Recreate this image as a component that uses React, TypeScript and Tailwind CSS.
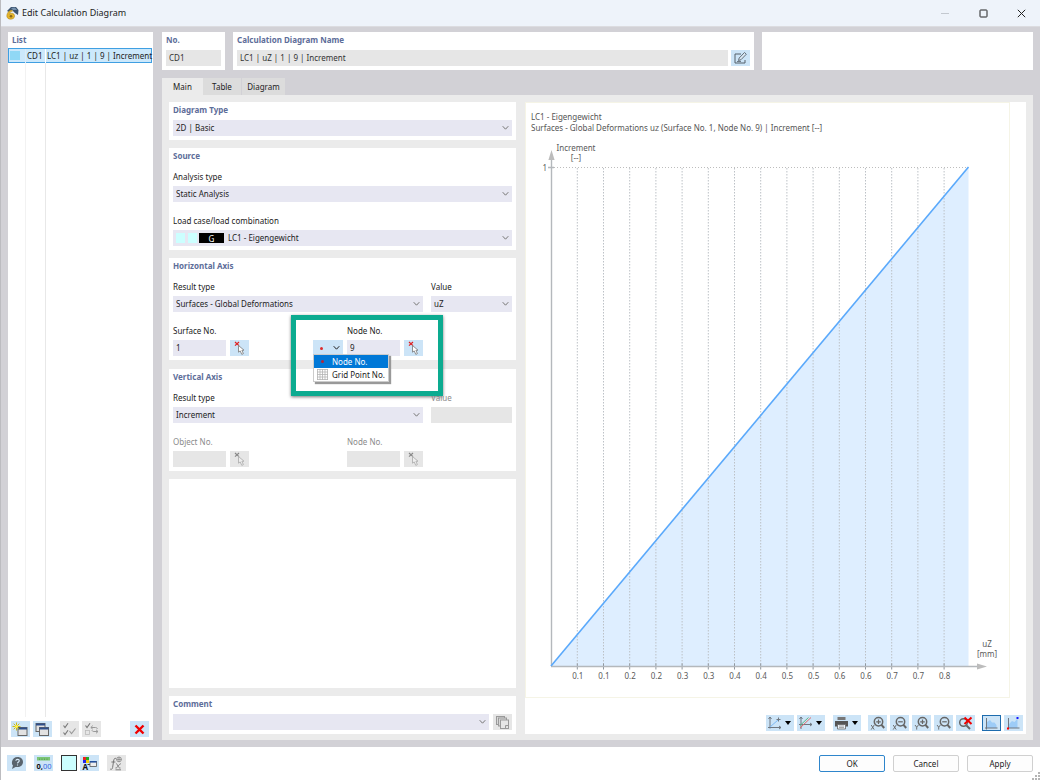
import { useState } from 'react';
import type { ReactNode } from 'react';

const FIELD = 'h-4 w-full min-w-0 appearance-none rounded-none border-0 bg-[#e7e7f2] px-[3px] text-[8px] leading-4 text-[#222] outline-none';
const DISABLED = 'h-4 w-full min-w-0 border-0 bg-[#e6e6e6] px-[3px] text-[8px] leading-4 text-[#333] outline-none';

const ticks = ['0.1', '0.1', '0.2', '0.2', '0.3', '0.3', '0.4', '0.4', '0.5', '0.5', '0.6', '0.6', '0.7', '0.7', '0.8'];

interface PanelProps {
  title?: string;
  className?: string;
  children?: ReactNode;
}

const Panel = ({ title, className = '', children }: PanelProps) => (
  <section className={`bg-white px-1 pb-1 ${className}`}>
    {title && <h2 className="h-[14px] text-[8px] leading-[15px] font-bold text-[#5d6d99]">{title}</h2>}
    {children}
  </section>
);

interface SelectProps {
  id: string;
  options: string[];
  label?: string;
  className?: string;
  fieldClass?: string;
  children?: ReactNode;
}

const Select = ({ id, options, label, className = '', fieldClass = '', children }: SelectProps) => (
  <div className={className}>
    {label && <label htmlFor={id} className="mb-0.5 block h-[14px] text-[8px] leading-[14px]">{label}</label>}
    <div className="relative h-4">
      <select id={id} aria-label={label ? undefined : id} className={`${FIELD} block ${fieldClass}`}>
        {options.map((o) => <option key={o}>{o}</option>)}
      </select>
      {children}
      <Chevron className="pointer-events-none absolute top-[5px] right-[3px]" />
    </div>
  </div>
);

const Chevron = ({ className = '' }: { className?: string }) => (
  <svg className={className} width="7" height="6" viewBox="0 0 7 6" fill="none" stroke="#777" strokeWidth="1">
    <path d="M0.7 1.2 L3.5 4.2 L6.3 1.2" />
  </svg>
);

interface IconButtonProps {
  label: string;
  disabled?: boolean;
  active?: boolean;
  wide?: boolean;
  children: ReactNode;
}

const IconButton = ({ label, disabled, active, wide, children }: IconButtonProps) => (
  <button
    type="button"
    aria-label={label}
    disabled={disabled}
    className={`flex h-4 shrink-0 items-center ${wide ? 'w-7 justify-between pr-[3px] pl-px' : 'w-[19px] justify-center'} ${disabled ? 'bg-[#e6e6e6]' : 'bg-[#cce4f7]'} ${active ? 'outline outline-1 -outline-offset-1 outline-[#1d6cae]' : ''}`}
  >
    {children}
    {wide && <svg width="6" height="4" viewBox="0 0 6 4"><path d="M0 0 H6 L3 4 Z" fill="#000" /></svg>}
  </button>
);

const PickIcon = ({ muted }: { muted?: boolean }) => (
  <svg width="15" height="15" viewBox="0 0 15 15" fill="none">
    <path d="M3 1 L7 4.6 M7 1 L3 4.6" stroke={muted ? '#888' : '#e02020'} strokeWidth="1.2" />
    <path d="M6.5 4.5 L6.5 11.2 L8.2 9.9 L9.8 13.4 L11.4 12.6 L9.9 9.4 L12 9.2 Z" fill={muted ? '#eee' : '#fff'} stroke={muted ? '#aaa' : '#777'} strokeWidth="0.8" />
  </svg>
);

const ZoomIcon = ({ axis, plus }: { axis: string; plus?: boolean }) => (
  <svg width="17" height="15" viewBox="0 0 17 15" fill="none" stroke="#666">
    <circle cx="9.5" cy="5.8" r="4.2" strokeWidth="1.5" />
    <path d="M12.5 8.8 L15.2 12" strokeWidth="2" />
    <path d={plus ? 'M7.2 5.8 H11.8 M9.5 3.5 V8.1' : 'M7.2 5.8 H11.8'} strokeWidth="1.2" />
    <path d={axis === 'X' ? 'M2.2 9 L5.2 13.6 M5.2 9 L2.2 13.6' : 'M2 9 L3.7 11.2 L5.4 9 M3.7 11.2 V13.6'} strokeWidth="0.9" />
  </svg>
);

const AppIcon = () => (
  <svg width="13" height="14" viewBox="0 0 13 14">
    <path d="M1 5 L5 1 L10 1 L12.5 4 L12 9 L9 7 L6 4 L3 6 Z" fill="#3c5470" />
    <path d="M5 2 L9 1.5 L11 4 L7 4 Z" fill="#7590ad" />
    <path d="M5.5 4 C1.5 5 0.4 9 1 11 C1.7 13.4 5 13.8 7.3 12.5 C9.4 11 8.8 7.8 6.4 7.3 C5 7 4 7.6 3.4 8.4 C3.6 6.7 4.6 5.4 6.6 5.2 Z" fill="#e5b52c" stroke="#a67c12" strokeWidth="0.5" />
    <circle cx="5" cy="10.2" r="1.3" fill="#8a6a1a" />
  </svg>
);

const TitleBar = () => (
  <header className="flex h-[26px] shrink-0 items-center bg-[#eef3fa] pl-[5px]">
    <AppIcon />
    <h1 className="ml-[3px] text-[9px] leading-4 text-[#1c1c1c]">Edit Calculation Diagram</h1>
    <div className="ml-auto flex h-full">
      <button type="button" aria-label="Minimize" disabled className="flex w-[38px] items-center justify-center">
        <svg width="8" height="8" viewBox="0 0 8 8"><path d="M0 4.5 H8" stroke="#c3c8cf" /></svg>
      </button>
      <button type="button" aria-label="Maximize" className="flex w-[38px] items-center justify-center">
        <svg width="9" height="9" viewBox="0 0 9 9"><rect x="1" y="1" width="7" height="7" rx="0.6" fill="none" stroke="#222" /></svg>
      </button>
      <button type="button" aria-label="Close" className="flex w-[38px] items-center justify-center">
        <svg width="9" height="9" viewBox="0 0 9 9"><path d="M0.8 0.8 L8.2 8.2 M8.2 0.8 L0.8 8.2" stroke="#222" /></svg>
      </button>
    </div>
  </header>
);

const WindowGlyph = ({ x, y }: { x: number; y: number }) => (
  <g>
    <rect x={x} y={y} width="9" height="8" fill="#e2e2e2" stroke="#666" strokeWidth="1" />
    <rect x={x} y={y} width="9" height="2" fill="#2d4f8c" />
  </g>
);

const ListPanel = () => (
  <aside className="flex w-[145px] shrink-0 flex-col bg-white pb-[3px]">
    <h2 className="h-4 pl-1 text-[8px] leading-4 font-bold text-[#5d6d99]">List</h2>
    <div className="mr-px grid flex-1 grid-cols-[17px_20px_1fr] grid-rows-[15px_1fr] text-[8px] leading-[15px]">
      <button
        type="button"
        className="col-span-3 grid grid-cols-[16px_20px_1fr] border border-[#3f9fe2] bg-[#cce8fb] text-left leading-[13px] whitespace-nowrap text-[#222]"
      >
        <span className="mt-0.5 ml-px h-[9px] w-[10px] bg-[#90d8f5]" />
        <span className="border-l border-[#dcecf8] pl-px">CD1</span>
        <span className="border-l border-white pl-px">LC1 | u<span className="text-[7px]">Z</span> | 1 | 9 | Increment</span>
      </button>
      <span />
      <span className="border-l border-[#f2f2f2]" />
      <span className="border-l border-[#e8e8e8]" />
    </div>
    <div className="mt-1 flex items-center gap-[3px] pr-1 pl-[3px]">
      <IconButton label="New">
        <svg width="17" height="15" viewBox="0 0 17 15">
          <WindowGlyph x={6} y={5.5} />
          <path d="M4.5 0.5 V8.5 M0.5 4.5 H8.5 M1.7 1.7 L7.3 7.3 M7.3 1.7 L1.7 7.3" stroke="#c9b500" strokeWidth="0.9" />
          <circle cx="4.5" cy="4.5" r="1.6" fill="#fff04a" />
        </svg>
      </IconButton>
      <IconButton label="Copy">
        <svg width="17" height="15" viewBox="0 0 17 15">
          <WindowGlyph x={2} y={1.5} />
          <WindowGlyph x={5.5} y={5.5} />
        </svg>
      </IconButton>
      <span className="w-0.5" />
      <IconButton label="Select all" disabled>
        <svg width="17" height="15" viewBox="0 0 17 15" fill="none" stroke="#777" strokeWidth="1.1">
          <path d="M2.5 3.5 L4 5.5 L7 1.2 M2.5 10.5 L4 12.5 L7 8.2" />
          <path d="M8.5 9 L10.5 11.5 L14.5 6.5" stroke="#999" />
        </svg>
      </IconButton>
      <IconButton label="Invert selection" disabled>
        <svg width="17" height="15" viewBox="0 0 17 15" fill="none" stroke="#777" strokeWidth="1.1">
          <path d="M2.5 3.5 L4 5.5 L7 1.2" />
          <rect x="2.5" y="8.5" width="4" height="4" stroke="#bbb" strokeWidth="0.8" />
          <path d="M7.8 5.5 L9.8 3.6 M7.8 5.5 L9.8 7.2 M8 5.5 H12.5 C13.8 5.5 14.3 6.2 14.3 7 M15 9.5 L13 7.8 M15 9.5 L13 11.3 M14.8 9.5 H11 C9.8 9.5 9 9 9 8.2" stroke="#999" strokeWidth="1" />
        </svg>
      </IconButton>
      <span className="flex-1" />
      <IconButton label="Delete">
        <svg width="11" height="11" viewBox="0 0 11 11"><path d="M1.5 1.5 L9.5 9.5 M9.5 1.5 L1.5 9.5" stroke="#f00000" strokeWidth="2.4" /></svg>
      </IconButton>
    </div>
  </aside>
);

interface NumberFieldProps {
  id: string;
  label: string;
  value?: string;
  disabled?: boolean;
}

const NumberField = ({ id, label, value = '', disabled }: NumberFieldProps) => (
  <div className={`grid grid-cols-[53px_19px] gap-x-1 gap-y-0.5 ${disabled ? 'text-[#8b8b8b]' : ''}`}>
    <label htmlFor={id} className="col-span-2 h-[14px] text-[8px] leading-[14px]">{label}</label>
    <input id={id} type="text" defaultValue={value} disabled={disabled} className={disabled ? DISABLED : FIELD} />
    <IconButton label={`Pick ${label}`} disabled={disabled}><PickIcon muted={disabled} /></IconButton>
  </div>
);

const NodeTypePicker = () => {
  const [type, setType] = useState('Node No.');
  return (
    <div className="relative mr-1 self-end">
      <button type="button" aria-haspopup="listbox" aria-expanded="true" aria-label={type} className="flex h-4 w-[30px] items-center justify-between bg-[#cce4f7] pr-[3px] pl-[7px]">
        <span className="h-[3px] w-[3px] rounded-full bg-[#dd2c2c]" />
        <svg width="7" height="6" viewBox="0 0 7 6" fill="none" stroke="#222"><path d="M0.7 1.2 L3.5 4.2 L6.3 1.2" /></svg>
      </button>
      <div role="listbox" className="absolute top-[14px] left-0 z-10 w-[76px] border border-[#ccc] bg-white text-[8px] leading-[13px] whitespace-nowrap shadow-[2px_2px_1px_#999]">
        <button type="button" role="option" aria-selected="true" onClick={() => setType('Node No.')} className="flex h-[13px] w-full items-center bg-[#0078d7] text-white">
          <span className="ml-[7px] h-[3px] w-[3px] rounded-full bg-[#b3263a]" />
          <span className="ml-2">Node No.</span>
        </button>
        <button type="button" role="option" aria-selected="false" onClick={() => setType('Grid Point No.')} className="flex h-[13px] w-full items-center text-[#222]">
          <svg className="ml-[3px]" width="11" height="11" viewBox="0 0 11 11" stroke="#b4b4b4" strokeWidth="0.8">
            <path d="M0.5 0 V11 M3 0 V11 M5.5 0 V11 M8 0 V11 M10.5 0 V11 M0 0.5 H11 M0 3 H11 M0 5.5 H11 M0 8 H11 M0 10.5 H11" />
          </svg>
          <span className="ml-1">Grid Point No.</span>
        </button>
      </div>
    </div>
  );
};

const Settings = () => (
  <div className="flex w-[347px] shrink-0 flex-col gap-2">
    <Panel title="Diagram Type">
      <Select id="Diagram Type" options={['2D | Basic']} className="mt-1" />
    </Panel>
    <Panel title="Source">
      <Select id="analysis" label="Analysis type" options={['Static Analysis']} className="mt-2" />
      <Select id="loadcase" label="Load case/load combination" options={['LC1 - Eigengewicht']} className="mt-3" fieldClass="pl-[55px]">
        <span className="pointer-events-none absolute top-[3px] left-[3px] flex h-[10px] gap-[3px]">
          <span className="w-[9px] bg-[#ccffff]" />
          <span className="w-[9px] bg-[#ccffff]" />
          <span className="-ml-px w-[25px] bg-black text-center text-[8px] leading-[11px] text-white">G</span>
        </span>
      </Select>
    </Panel>
    <Panel title="Horizontal Axis" className="relative">
      <div className="mt-2 flex gap-2">
        <Select id="h-result" label="Result type" options={['Surfaces - Global Deformations']} className="flex-1" />
        <Select id="h-value" label="Value" options={['uZ']} className="w-[81px]" />
      </div>
      <div className="mt-3 mr-[89px] flex">
        <NumberField id="surface" label="Surface No." value="1" />
        <span className="flex-1" />
        <NodeTypePicker />
        <NumberField id="node" label="Node No." value="9" />
      </div>
      <div className="pointer-events-none absolute top-[57px] left-[122px] z-20 h-[81px] w-[152px] border-[5px] border-[#0cab90] shadow-[0_1px_3px_#777]" />
    </Panel>
    <Panel title="Vertical Axis" className="mt-px">
      <div className="mt-2 flex gap-2">
        <Select id="v-result" label="Result type" options={['Increment']} className="flex-1" />
        <div className="w-[81px]">
          <label htmlFor="v-value" className="mb-0.5 block h-[14px] text-[8px] leading-[14px] text-[#8b8b8b]">Value</label>
          <input id="v-value" type="text" disabled className={`${DISABLED} block`} />
        </div>
      </div>
      <div className="mt-3 mr-[89px] flex justify-between">
        <NumberField id="object" label="Object No." disabled />
        <NumberField id="v-node" label="Node No." disabled />
      </div>
    </Panel>
    <Panel className="flex-1" />
    <Panel title="Comment">
      <div className="mt-1 flex gap-1">
        <Select id="Comment" options={['']} className="flex-1" />
        <IconButton label="Edit comments" disabled>
          <svg width="15" height="15" viewBox="0 0 15 15" fill="#d8d8d8" stroke="#999">
            <rect x="1.5" y="1.5" width="8" height="8" />
            <rect x="3.5" y="3" width="8" height="8" />
            <rect x="5.5" y="5" width="8" height="8.5" fill="#e6e6e6" />
            <path d="M10.5 13 V10.5 H13" />
          </svg>
        </IconButton>
      </div>
    </Panel>
  </div>
);

const Chart = () => (
  <svg className="mt-0.5 min-h-0 w-full flex-1" viewBox="0 0 483 561" preserveAspectRatio="xMinYMin meet" fontSize="8" fill="#5a5a5a">
    <path d="M25 530 L442.5 31 V530 Z" fill="#deeeff" />
    <path d="M25 31.5 H442" stroke="#bdbdbd" strokeDasharray="1 2" />
    {ticks.map((t, i) => {
      const x = 51.3 + i * 26.2;
      return (
        <g key={i}>
          <path d={`M${x} 32 V530`} stroke="#bcc1c6" strokeDasharray="1.5 1.5" />
          <path d={`M${x} 527.5 V533.5`} stroke="#8f979f" />
          <text x={x + 0.5} y="543" textAnchor="middle">{t}</text>
        </g>
      );
    })}
    <path d="M25.5 530 V24 M22 31.5 H28 M25 530.5 H452" stroke="#b4b8bc" strokeWidth="1.4" fill="none" />
    <path d="M25.5 14 L28.6 24 H22.4 Z M461 530.5 L451 533.6 V527.4 Z" fill="#bcbcbc" />
    <path d="M25 530 L442.5 31" stroke="#5aa9fb" strokeWidth="1.6" />
    <text x="21" y="34.5" textAnchor="end">1</text>
    <text x="50" y="15" textAnchor="middle">Increment</text>
    <text x="50" y="25" textAnchor="middle">[--]</text>
    <text x="461" y="511" textAnchor="middle">uZ</text>
    <text x="461" y="521" textAnchor="middle">[mm]</text>
  </svg>
);

const ChartToolbar = () => (
  <div className="flex justify-end gap-[3px] pr-[3px]">
    <IconButton label="Axis settings" wide>
      <svg width="15" height="14" viewBox="0 0 15 14" fill="none" stroke="#6f7780">
        <path d="M3 1 V12.5 M1 11.5 H14 M1.5 3 L3 1 L4.5 3 M12 10 L14 11.5 L12 13" />
        <path d="M3 11 L11 4" stroke="#7cb9f5" />
        <path d="M9.5 3.5 H13.5 M11.5 1.5 V5.5" />
      </svg>
    </IconButton>
    <IconButton label="Diagram curves" wide>
      <svg width="15" height="14" viewBox="0 0 15 14" fill="none" stroke="#6f7780">
        <path d="M3 1 V13 M1 8.5 H14 M1.5 3 L3 1 L4.5 3 M12 7 L14 8.5 L12 10" />
        <path d="M2 12 L13 1.5" stroke="#e06868" />
        <path d="M2 9.5 L10.5 1.5" stroke="#5fb88a" />
      </svg>
    </IconButton>
    <span className="w-0.5" />
    <IconButton label="Print" wide>
      <svg width="15" height="14" viewBox="0 0 15 14">
        <path d="M3.5 1 H11.5 V4 H3.5 Z" fill="#777" />
        <path d="M1 5 H14 V10.5 H1 Z" fill="#555" />
        <path d="M3.5 8.5 H11.5 V13 H3.5 Z" fill="#eef5fb" stroke="#666" strokeWidth="0.8" />
        <path d="M5 10 H10 M5 11.5 H10" stroke="#888" strokeWidth="0.7" />
      </svg>
    </IconButton>
    <span className="w-px" />
    <IconButton label="Zoom in X"><ZoomIcon axis="X" plus /></IconButton>
    <IconButton label="Zoom out X"><ZoomIcon axis="X" /></IconButton>
    <IconButton label="Zoom in Y"><ZoomIcon axis="Y" plus /></IconButton>
    <IconButton label="Zoom out Y"><ZoomIcon axis="Y" /></IconButton>
    <IconButton label="Reset zoom">
      <svg width="17" height="15" viewBox="0 0 17 15" fill="none">
        <circle cx="6.5" cy="6.5" r="3.8" stroke="#666" strokeWidth="1.5" />
        <path d="M9.5 9.5 L13 13" stroke="#666" strokeWidth="2" />
        <path d="M7.5 1.5 L14.5 8 M14.5 1.5 L7.5 8" stroke="#f00000" strokeWidth="2" />
      </svg>
    </IconButton>
    <span className="w-px" />
    <IconButton label="Fill area" active>
      <svg width="17" height="15" viewBox="0 0 17 15">
        <path d="M4 12 V6 L7 4 L9 6.5 L11.5 6.5 L13.5 9 V12 Z" fill="#9dccf7" />
        <path d="M3.5 2 V12 H14.5 M2 12 H3.5 V13.5" fill="none" stroke="#6f7780" />
      </svg>
    </IconButton>
    <IconButton label="Show extremes">
      <svg width="17" height="15" viewBox="0 0 17 15">
        <path d="M4 12 V8 L7 5 L9.5 6 L12.5 2.5 V12 Z" fill="#9dccf7" />
        <path d="M3.5 2 V12 H14.5" fill="none" stroke="#6f7780" />
        <rect x="2" y="11.5" width="2" height="2" fill="#f00" />
        <rect x="11.5" y="1" width="2" height="2" fill="#1515ff" />
      </svg>
    </IconButton>
  </div>
);

const Footer = () => (
  <footer className="relative flex h-[33px] shrink-0 items-start bg-white pt-2 pr-[7px] pl-1.5">
    <div className="flex items-center">
      <IconButton label="Help">
        <svg width="14" height="14" viewBox="0 0 14 14">
          <path d="M7.5 1 C11 1 13 3.2 13 6 C13 9 10.5 11 7.5 11 L5.5 11 L2 13 L3 9.5 C2 8.5 1.8 7 2 5.8 C2.4 2.8 4.8 1 7.5 1 Z" fill="#5a646d" />
          <path d="M5.8 4.8 C6 2.9 9.3 2.9 9.3 4.8 C9.3 6 7.6 6 7.5 7.4 M7.5 8.4 V9.6" fill="none" stroke="#d8ebf9" strokeWidth="1.1" />
        </svg>
      </IconButton>
      <span className="w-2" />
      <IconButton label="Units and decimal places">
        <svg width="17" height="15" viewBox="0 0 17 15" fontSize="7.5" fontWeight="bold">
          <rect x="2" y="1" width="13" height="3.5" fill="#7cc576" />
          <path d="M4.5 4 V2.5 M7 4 V2.5 M9.5 4 V2.5 M12 4 V2.5" stroke="#478f48" strokeWidth="0.6" />
          <text x="1.5" y="13" fill="#111">0,<tspan fill="#3567e0" fontWeight="normal">00</tspan></text>
        </svg>
      </IconButton>
      <span className="w-2" />
      <button type="button" aria-label="Color" className="h-4 w-4 border border-[#333] bg-[#ccffff]" />
      <span className="w-[3px]" />
      <IconButton label="Display properties">
        <svg width="17" height="15" viewBox="0 0 17 15" fontSize="8" fontWeight="bold">
          <rect x="2" y="1" width="3" height="3" fill="#e22" />
          <rect x="5" y="1" width="3" height="3" fill="#2a2" />
          <rect x="2" y="4" width="3" height="3" fill="#22e" />
          <rect x="5" y="4" width="3" height="3" fill="#ec0" />
          <text x="1.5" y="14" fill="#111">A</text>
          <path d="M6.5 8.5 H9" stroke="#333" />
          <rect x="9" y="5.5" width="6.5" height="5" fill="#eee" stroke="#555" strokeWidth="0.8" />
          <rect x="9" y="5" width="6.5" height="1.6" fill="#24509c" />
        </svg>
      </IconButton>
      <span className="w-2" />
      <IconButton label="Formula" disabled>
        <svg width="17" height="15" viewBox="0 0 17 15" fill="none" stroke="#777">
          <path d="M8 2.6 C6.8 1.6 6 2.8 5.6 5 L4.6 11.5 C4.3 13.3 3.2 13.8 2.2 13 M3.4 6 H7.4" />
          <path d="M8 7.6 C9.5 7.2 10 12.8 12.5 12 M13 7.8 C11 7.4 9.5 12.8 7.4 12 M7.5 13.8 H13" strokeWidth="0.9" />
          <circle cx="11" cy="3.4" r="2.4" strokeWidth="0.7" />
          <path d="M8.6 3.4 H13.4 M11 1 V5.8" strokeWidth="0.7" />
        </svg>
      </IconButton>
    </div>
    <div className="ml-auto flex gap-2 text-[8px] text-[#1c1c1c]">
      <button type="button" className="h-[17px] w-[66px] rounded-[2px] border border-[#2f86cc] bg-[#fdfdfd]">OK</button>
      <button type="button" className="h-[17px] w-[66px] rounded-[2px] border border-[#d0d0d0] bg-[#fdfdfd]">Cancel</button>
      <button type="button" className="h-[17px] w-[66px] rounded-[2px] border border-[#d0d0d0] bg-[#fdfdfd]">Apply</button>
    </div>
    <svg className="absolute right-0 bottom-0" width="8" height="8" viewBox="0 0 8 8" fill="#b5b5b5">
      <path d="M6 0 H8 V2 H6 Z M3 3 H5 V5 H3 Z M6 3 H8 V5 H6 Z M0 6 H2 V8 H0 Z M3 6 H5 V8 H3 Z M6 6 H8 V8 H6 Z" />
    </svg>
  </footer>
);

export default function App() {
  return (
    <div className="flex h-screen flex-col overflow-hidden border-l border-[#bcbcc0] bg-[#d2d1d6] font-['Noto_Sans','Open_Sans',sans-serif] text-[8px] text-[#222]">
      <TitleBar />
      <div className="flex min-h-0 flex-1 gap-[9px] border-t border-[#dcdce0] pt-[5px] pr-[7px] pb-[7px] pl-[7px]">
        <ListPanel />
        <main className="flex min-w-0 flex-1 flex-col">
          <div className="flex gap-2">
            <Panel title="No." className="w-[63px]">
              <input type="text" aria-label="No." readOnly value="CD1" className={`${DISABLED} mt-1 block`} />
            </Panel>
            <Panel title="Calculation Diagram Name" className="w-[521px]">
              <div className="mt-1 flex gap-[3px]">
                <input type="text" aria-label="Calculation Diagram Name" readOnly value="LC1 | uZ | 1 | 9 | Increment" className={DISABLED} />
                <IconButton label="Edit name">
                  <svg width="15" height="14" viewBox="0 0 15 14" fill="none" stroke="#55606b">
                    <path d="M8 3 H2 V12 H12 V9" />
                    <path d="M5.5 9.5 L6.2 7 L11.5 1.5 L13.3 3.2 L8 8.7 Z" fill="#dbe9f5" strokeWidth="0.9" />
                    <path d="M4 10.5 H8" strokeWidth="0.8" />
                  </svg>
                </IconButton>
              </div>
            </Panel>
            <Panel className="flex-1" />
          </div>
          <div role="tablist" className="mt-2 flex h-[17px] leading-[17px]">
            <button type="button" role="tab" aria-selected="true" className="w-[41px] bg-[#ebebeb]">Main</button>
            <button type="button" role="tab" aria-selected="false" className="w-[38px] bg-[#dcdcdc]">Table</button>
            <button type="button" role="tab" aria-selected="false" className="w-[44px] border-l border-[#d2d1d6] bg-[#dcdcdc]">Diagram</button>
          </div>
          <div className="flex min-h-0 flex-1 gap-[9px] bg-[#ebebeb] p-[7px] pb-1.5">
            <Settings />
            <div className="flex min-w-0 flex-1 flex-col bg-white pb-[3px]">
              <div className="mr-4 flex min-h-0 flex-1 flex-col border border-[#f5f4e6] pt-2">
                <div className="pl-[5px] text-[8px] leading-[11px] text-[#555]">
                  <p>LC1 - Eigengewicht</p>
                  <p>Surfaces - Global Deformations u<span className="text-[7px]">Z</span> (Surface No. 1, Node No. 9) | Increment [--]</p>
                </div>
                <Chart />
              </div>
              <div className="h-[17px]" />
              <ChartToolbar />
            </div>
          </div>
        </main>
      </div>
      <Footer />
    </div>
  );
}
